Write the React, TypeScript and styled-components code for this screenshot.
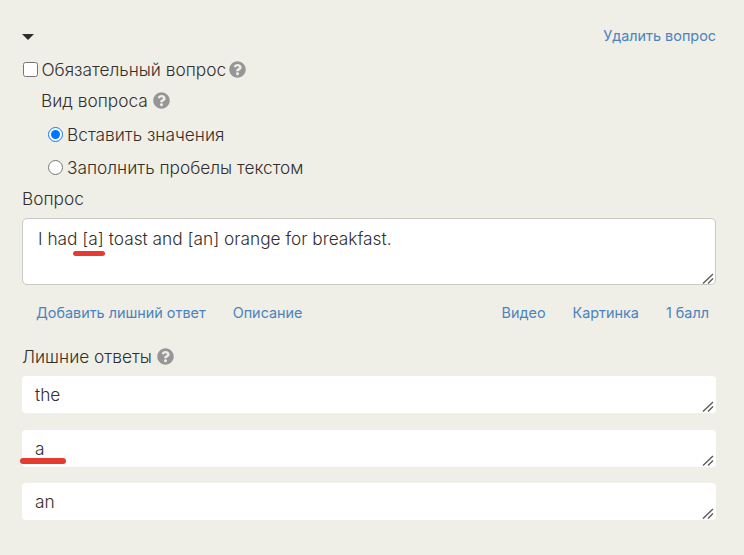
import { createGlobalStyle, styled } from "styled-components";
import { FaQuestionCircle } from "react-icons/fa";

const extraAnswers = [
  { value: "the", marked: false },
  { value: "a", marked: true },
  { value: "an", marked: false },
];

const Hint = () => (
  <HintIcon>
    <FaQuestionCircle size={17} />
  </HintIcon>
);

const ResizeGrip = () => (
  <Grip width="12" height="11" viewBox="0 0 12 11">
    <path d="M1 10.5 L11 1 M6 10.5 L11 5.5" stroke="#5c5c5c" strokeWidth="1.4" fill="none" strokeDasharray="none" />
  </Grip>
);

export default function App() {
  return (
    <Page>
      <GlobalStyle />
      <TopBar>
        <Caret />
        <LinkText>Удалить вопрос</LinkText>
      </TopBar>
      <RequiredRow>
        <Checkbox type="checkbox" />
        <span>Обязательный вопрос</span>
        <Hint />
      </RequiredRow>
      <KindRow>
        <span>Вид вопроса</span>
        <Hint />
      </KindRow>
      <RadioRow>
        <Radio type="radio" name="kind" defaultChecked />
        <span>Вставить значения</span>
      </RadioRow>
      <RadioRow>
        <Radio type="radio" name="kind" />
        <span>Заполнить пробелы текстом</span>
      </RadioRow>
      <SectionLabel>Вопрос</SectionLabel>
      <QuestionBox>
        <QuestionArea readOnly defaultValue="I had [a] toast and [an] orange for breakfast." />
        <QuestionMark />
        <ResizeGrip />
      </QuestionBox>
      <ActionsBar>
        <ActionsGroup>
          <LinkText>Добавить лишний ответ</LinkText>
          <LinkText>Описание</LinkText>
        </ActionsGroup>
        <ActionsGroup>
          <LinkText>Видео</LinkText>
          <LinkText>Картинка</LinkText>
          <LinkText>1 балл</LinkText>
        </ActionsGroup>
      </ActionsBar>
      <AnswersLabel>
        <span>Лишние ответы</span>
        <Hint />
      </AnswersLabel>
      <AnswersList>
        {extraAnswers.map(answer => (
          <AnswerBox key={answer.value}>
            <AnswerArea readOnly defaultValue={answer.value} />
            {answer.marked && <AnswerMark />}
            <ResizeGrip />
          </AnswerBox>
        ))}
      </AnswersList>
    </Page>
  );
}

const GlobalStyle = createGlobalStyle`
  html, body {
    margin: 0;
    padding: 0;
    background: #f0efe7;
  }
  * {
    box-sizing: border-box;
  }
`;
const Page = styled.div`
  width: 744px;
  height: 555px;
  overflow: hidden;
  padding: 24px 28px 0 22px;
  background: #f0efe7;
  color: #332f2d;
  font-family: Inter, "Noto Sans", sans-serif;
  font-size: 17.3px;
  font-weight: 300;
`;
const TopBar = styled.div`
  display: flex;
  align-items: center;
  justify-content: space-between;
  height: 22px;
`;
const Caret = styled.div`
  width: 0;
  height: 0;
  border-left: 6px solid transparent;
  border-right: 6px solid transparent;
  border-top: 6px solid #2f2c2a;
  margin-top: 4px;
`;
const LinkText = styled.a`
  color: #4a83bd;
  font-size: 14.4px;
  font-weight: 400;
  cursor: pointer;
`;
const HintIcon = styled.span`
  display: inline-flex;
  color: #969696;
`;
const RequiredRow = styled.label`
  display: flex;
  align-items: center;
  gap: 3px;
  height: 31px;
  margin-top: 8px;
`;
const Checkbox = styled.input`
  width: 15px;
  height: 15px;
  margin: 0 1px 0 0.5px;
`;
const KindRow = styled.div`
  display: flex;
  align-items: center;
  gap: 5px;
  height: 31px;
  padding-left: 19px;
  margin-bottom: 2px;
`;
const RadioRow = styled.label`
  display: flex;
  align-items: center;
  height: 33px;
  padding-left: 26px;
`;
const Radio = styled.input`
  width: 15px;
  height: 15px;
  margin: 0 4px 0 0;
`;
const SectionLabel = styled.div`
  height: 35px;
  line-height: 32px;
  margin-top: -1px;
`;
const QuestionBox = styled.div`
  position: relative;
  height: 67px;
`;
const QuestionArea = styled.textarea`
  display: block;
  width: 100%;
  height: 67px;
  padding: 10px 15px;
  border: 1px solid #c9c9c5;
  border-radius: 5px;
  background: #fff;
  color: #332f2d;
  font: inherit;
  line-height: 20px;
  outline: none;
  resize: none;
`;
const QuestionMark = styled.div`
  position: absolute;
  left: 51px;
  top: 33px;
  width: 32px;
  height: 5px;
  border-radius: 3px;
  background: #e53b30;
`;
const Grip = styled.svg`
  position: absolute;
  right: 2px;
  bottom: 1px;
  pointer-events: none;
`;
const ActionsBar = styled.div`
  display: flex;
  justify-content: space-between;
  align-items: center;
  height: 55px;
  padding: 0 7px 0 14px;
`;
const ActionsGroup = styled.div`
  display: flex;
  gap: 27px;
`;
const AnswersLabel = styled.div`
  display: flex;
  align-items: center;
  gap: 5px;
  height: 32px;
`;
const AnswersList = styled.div`
  display: flex;
  flex-direction: column;
  gap: 16.5px;
  margin-top: 4px;
`;
const AnswerBox = styled.div`
  position: relative;
  height: 37px;
`;
const AnswerArea = styled.textarea`
  display: block;
  width: 100%;
  height: 37px;
  padding: 9px 13px;
  border: none;
  border-radius: 4px;
  background: #fff;
  color: #332f2d;
  font: inherit;
  line-height: 20px;
  outline: none;
  resize: none;
`;
const AnswerMark = styled.div`
  position: absolute;
  left: -2px;
  top: 28px;
  width: 46px;
  height: 6px;
  border-radius: 3px;
  background: #e53b30;
`;
